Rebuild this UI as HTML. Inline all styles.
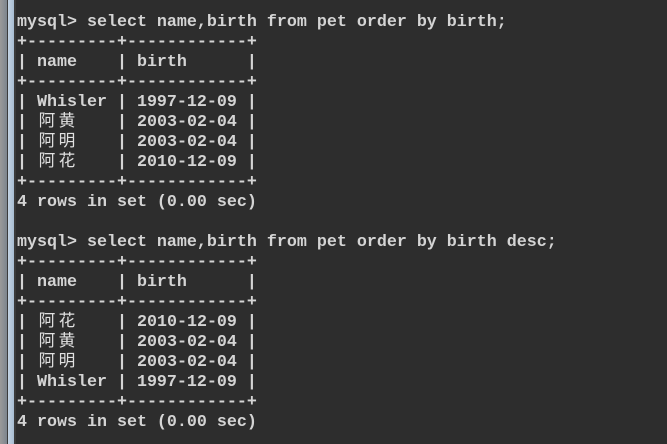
<!DOCTYPE html>
<html><head><meta charset="utf-8"><style>
html,body{margin:0;padding:0;}
body{width:667px;height:444px;background:#2d2d2d;position:relative;overflow:hidden;}
.s1{position:absolute;left:0;top:0;width:7px;height:444px;background:linear-gradient(90deg,#9a9a9a,#7d858e);}
.s2{position:absolute;left:7px;top:0;width:1px;height:444px;background:#3c3c3c;}
.s3{position:absolute;left:8px;top:0;width:6px;height:444px;background:linear-gradient(90deg,#c4d4e4,#a8bdd2);}
.s4{position:absolute;left:14px;top:0;width:2px;height:444px;background:#3a3a3a;}
.t{position:absolute;left:17px;top:13px;margin:0;font-family:"Liberation Mono","Noto Sans CJK SC",monospace;font-size:16.67px;font-weight:bold;line-height:20px;color:#d4d4d4;white-space:pre;}
.c{display:inline-block;width:20px;text-align:center;font-weight:normal;color:#e0e0e0;}
</style></head><body>
<div class="s1"></div><div class="s2"></div><div class="s3"></div><div class="s4"></div>
<pre class="t">mysql&gt; select name,birth from pet order by birth;
+---------+------------+
| name    | birth      |
+---------+------------+
| Whisler | 1997-12-09 |
| <span class="c">阿</span><span class="c">黄</span>    | 2003-02-04 |
| <span class="c">阿</span><span class="c">明</span>    | 2003-02-04 |
| <span class="c">阿</span><span class="c">花</span>    | 2010-12-09 |
+---------+------------+
4 rows in set (0.00 sec)

mysql&gt; select name,birth from pet order by birth desc;
+---------+------------+
| name    | birth      |
+---------+------------+
| <span class="c">阿</span><span class="c">花</span>    | 2010-12-09 |
| <span class="c">阿</span><span class="c">黄</span>    | 2003-02-04 |
| <span class="c">阿</span><span class="c">明</span>    | 2003-02-04 |
| Whisler | 1997-12-09 |
+---------+------------+
4 rows in set (0.00 sec)</pre>
</body></html>
